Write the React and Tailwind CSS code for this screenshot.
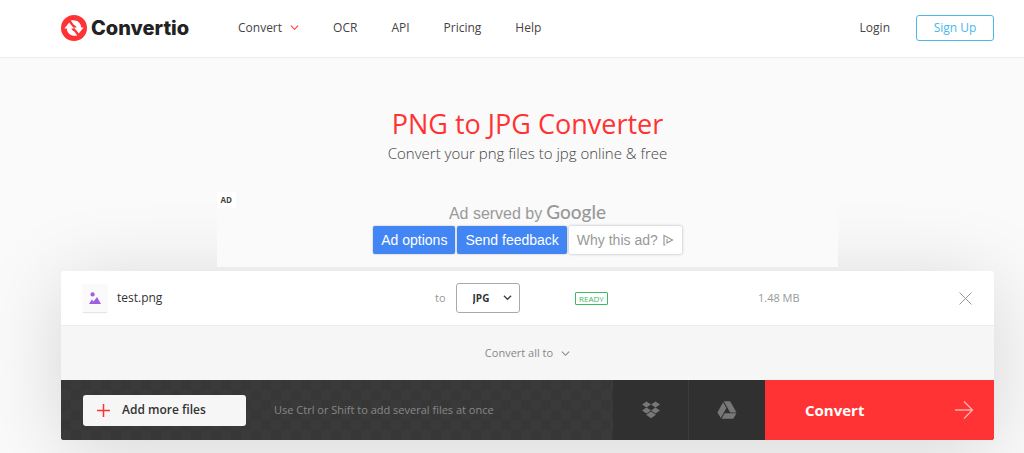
import React, { useState } from "react";

const navLinks = ["OCR", "API", "Pricing", "Help"];

function Chevron({ className, strokeWidth = 1.2 }) {
  return (
    <svg
      viewBox="0 0 10 10"
      fill="none"
      stroke="currentColor"
      strokeWidth={strokeWidth}
      className={className}
      aria-hidden="true"
    >
      <path d="M1 3l4 4 4-4" />
    </svg>
  );
}

function Logo() {
  return (
    <a href="#home" className="flex items-center gap-1 w-[177px]">
      <svg viewBox="0 0 26 26" className="w-[26px] h-[26px]" aria-hidden="true">
        <circle cx="13" cy="13" r="13" fill="#ff3333" />
        <path
          d="M3.4 13.4 8.2 7.6l4.8 5.800h-2.600c.1 1.600 2.400 2.300 3.400 3.600l2.400 3.400c-5.400 1.200-10.200-1.600-10.400-7z"
          fill="#fff"
        />
        <path
          d="M22.600 12.600 17.800 18.400 13 12.600h2.600c-.1-1.600-2.400-2.300-3.400-3.600L9.800 5.600c5.400-1.200 10.200 1.600 10.400 7z"
          fill="#fff"
        />
      </svg>
      <span className="font-['Inter',sans-serif] font-extrabold text-xl leading-6 text-[#222]">
        Convertio
      </span>
    </a>
  );
}

function Header() {
  return (
    <header className="bg-white border-b border-[#ededed] pl-[61px] pr-[30px] pb-0.5 h-[58px] flex items-center text-xs text-[#444]">
      <Logo />
      <nav className="flex items-center gap-[34px]">
        <button className="flex items-center gap-2">
          Convert
          <Chevron className="w-[9px] h-[9px] text-[#ff3333]" />
        </button>
        {navLinks.map((link) => (
          <a key={link} href={`#${link}`}>
            {link}
          </a>
        ))}
      </nav>
      <div className="ml-auto flex items-center gap-[26px]">
        <a href="#login">Login</a>
        <a
          href="#signup"
          className="w-[78px] h-[26px] flex items-center justify-center border border-[#4ab8e8] rounded-[3px] text-[#4ab8e8]"
        >
          Sign Up
        </a>
      </div>
    </header>
  );
}

function AdBox() {
  return (
    <aside className="relative z-10 w-2/3 mx-auto mt-6 h-[79px] bg-[#fafafa] font-['Liberation_Sans',sans-serif]">
      <span className="absolute top-1 left-0 bg-white px-1 py-0.5 text-[8px] leading-3 font-bold text-[#444] font-['Open_Sans',sans-serif]">
        AD
      </span>
      <div className="flex flex-col items-center pt-3">
        <p className="flex items-baseline gap-1 text-base leading-6 text-[#999]">
          Ad served by
          <span className="font-['Lato'] font-medium text-[19px]">Google</span>
        </p>
        <div className="flex gap-0.5 text-sm">
          <button className="h-7 px-2 bg-[#4285f4] text-white rounded-xs shadow-[0_0_2px_rgba(0,0,0,0.3)]">
            Ad options
          </button>
          <button className="h-7 px-2 bg-[#4285f4] text-white rounded-xs shadow-[0_0_2px_rgba(0,0,0,0.3)]">
            Send feedback
          </button>
          <button className="h-7 px-2 bg-white text-[#999] rounded-xs shadow-[0_0_3px_rgba(0,0,0,0.3)] flex items-center gap-1">
            Why this ad?
            <svg viewBox="0 0 12 12" className="w-3 h-3" fill="none" stroke="currentColor" strokeWidth="1.200" aria-hidden="true">
              <path d="M3.500 11H2V1.500L10.500 6 5 9V5" />
            </svg>
          </button>
        </div>
      </div>
    </aside>
  );
}

function FileRow({ format, setFormat }) {
  return (
    <div className="grid grid-cols-[374fr_140fr_183fr_236fr] items-center h-[54px] bg-white rounded-t-[3px]">
      <div className="flex items-center gap-[10px] pl-[22px]">
        <span className="w-6 h-7 bg-[#fafafa] shadow-[0_1px_1px_rgba(0,0,0,0.1)] flex items-center justify-center">
          <svg viewBox="0 0 12 12" className="w-3 h-3" fill="#a05ee0" aria-hidden="true">
            <circle cx="3.600" cy="2.400" r="2.100" />
            <path d="M0 12 2.800 7.400 4.600 9.600 8 5l4 7z" />
          </svg>
        </span>
        <span className="text-xs text-[#333]">test.png</span>
      </div>
      <div className="flex items-center gap-[10px]">
        <label htmlFor="format" className="text-[11px] text-[#999]">
          to
        </label>
        <div className="relative">
          <select
            id="format"
            value={format}
            onChange={(e) => setFormat(e.target.value)}
            className="appearance-none w-16 h-[30px] pl-4 border border-[#aaa] rounded-[3px] bg-white text-[10px] font-bold text-[#333]"
          >
            <option>JPG</option>
            <option>GIF</option>
            <option>WEBP</option>
          </select>
          <Chevron
            className="absolute right-2 top-[10px] w-[9px] h-[9px] text-[#444] pointer-events-none"
            strokeWidth={1.5}
          />
        </div>
      </div>
      <div className="flex">
        <span className="border border-[#3cbc62] rounded-[1px] px-[3px] text-[8px] leading-[11px] text-[#3cbc62]">
          READY
        </span>
      </div>
      <div className="flex items-center justify-between pr-[22px]">
        <span className="text-[11px] text-[#999]">1.48 MB</span>
        <button aria-label="Remove file">
          <svg viewBox="0 0 13 13" className="w-[13px] h-[13px]" stroke="#999" aria-hidden="true">
            <path d="M.5.500l12 12M12.500.500l-12 12" />
          </svg>
        </button>
      </div>
    </div>
  );
}

function BottomBar() {
  return (
    <div className="flex h-[60px] bg-[#373737] rounded-b-[3px] overflow-hidden">
      <div className="flex-1 flex items-center pl-[22px] bg-[conic-gradient(#3a3a3a_25%,#373737_0_50%,#3a3a3a_0_75%,#373737_0)] bg-size-[20px_20px]">
        <button className="w-[163px] h-[31px] flex items-center gap-3 pl-[14px] bg-[#f6f6f6] rounded-[3px] text-xs font-semibold text-[#333]">
          <svg viewBox="0 0 13 13" className="w-[13px] h-[13px]" stroke="#ff3333" strokeWidth="1.500" aria-hidden="true">
            <path d="M6.500 0v13M0 6.500h13" />
          </svg>
          Add more files
        </button>
        <span className="ml-7 text-[11px] text-[#888]">
          Use Ctrl or Shift to add several files at once
        </span>
      </div>
      <button
        aria-label="Dropbox"
        className="w-[76px] flex items-center justify-center bg-[#303030] border-r border-[#3b3b3b]"
      >
        <svg viewBox="0 0 20 18" className="w-5 h-[18px]" fill="#777" aria-hidden="true">
          <path d="M5.500.500 10 3.500 5.500 6.500 1 3.500zM14.500.500 19 3.500 14.500 6.500 10 3.500zM5.500 6.500 10 9.500 5.500 12.500 1 9.500zM14.500 6.500 19 9.500 14.500 12.500 10 9.500zM10 10.500l5 3.300L10 17.200l-5-3.400z" />
        </svg>
      </button>
      <button
        aria-label="Google Drive"
        className="w-[76px] flex items-center justify-center bg-[#303030]"
      >
        <svg viewBox="0 0 20 18" className="w-5 h-[18px]" fill="#777" aria-hidden="true">
          <path d="M6.800.300h6.400l6.300 11.200h-6.300zM6.100 1.200l3.300 5.700-5.600 10.200L.400 11.500zM7.600 12.200h11.800l-3.100 5.500H4.600z" />
        </svg>
      </button>
      <button className="w-[229px] flex items-center justify-between pl-10 pr-5 bg-[#ff3333] text-white text-[15px] font-bold">
        Convert
        <svg viewBox="0 0 20 20" className="w-5 h-5" fill="none" stroke="#ffb0b0" strokeWidth="1.300" aria-hidden="true">
          <path d="M1 10h17M10 1.500l8.500 8.500-8.500 8.500" />
        </svg>
      </button>
    </div>
  );
}

function App() {
  const [format, setFormat] = useState("JPG");

  return (
    <div className="min-h-screen bg-[#fafafa] overflow-hidden font-['Open_Sans',sans-serif]">
      <Header />
      <main className="pl-[61px] pr-[30px] pt-12 pb-3">
        <h1 className="text-center text-[27px] leading-9 text-[#ff3333]">
          PNG to JPG Converter
        </h1>
        <p className="text-center text-[15px] leading-[22px] font-light text-[#444]">
          Convert your png files to jpg online &amp; free
        </p>
        <AdBox />
        <section className="mt-1 rounded-[3px] shadow-[0_10px_80px_rgba(0,0,0,0.150)]">
          <FileRow format={format} setFormat={setFormat} />
          <div className="h-[55px] bg-[#f6f6f6] border-t border-[#ececec] flex items-center justify-center">
            <button className="flex items-center gap-2 text-[11px] text-[#888]">
              Convert all to
              <Chevron className="w-[9px] h-[9px]" />
            </button>
          </div>
          <BottomBar />
        </section>
      </main>
    </div>
  );
}

export default App;
